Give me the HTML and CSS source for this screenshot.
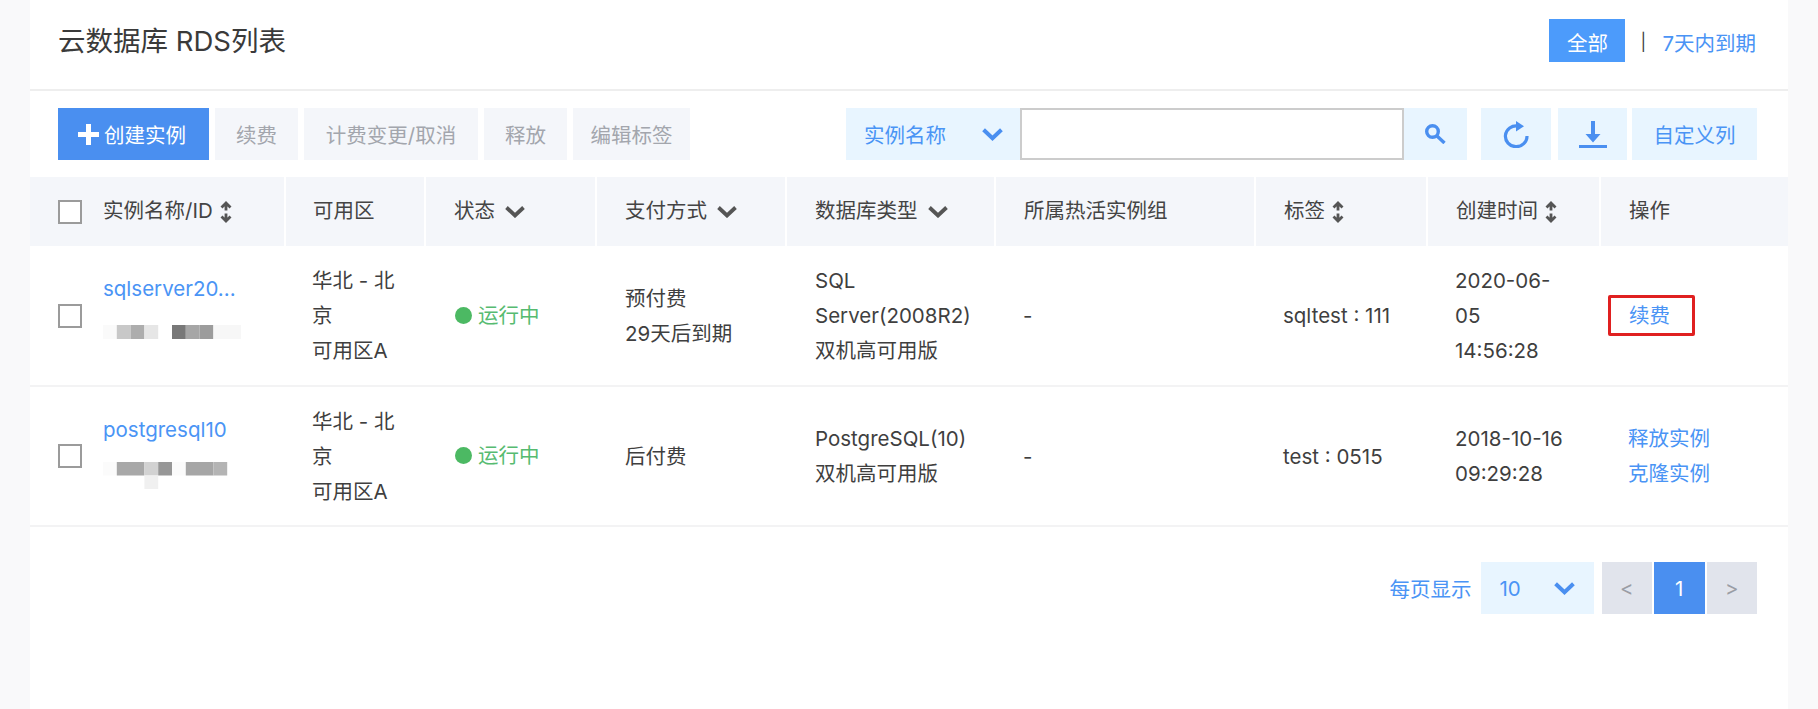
FILE: index.html
```html
<!DOCTYPE html>
<html lang="zh-CN">
<head>
<meta charset="utf-8">
<title>云数据库 RDS列表</title>
<link rel="stylesheet" href="styles.css">
</head>
<body>
<svg class="defs" width="0" height="0" aria-hidden="true">
  <symbol id="sort" viewBox="0 0 12 22"><path d="M1.500 6.500 6 2l4.500 4.500M6 3v6.500M1.500 15.500 6 20l4.500-4.500M6 19v-6.500" fill="none" stroke="currentColor" stroke-width="2.800"/></symbol>
  <symbol id="chev" viewBox="0 0 20 12"><path d="M1.500 1.500 10 9.500l8.500-8" fill="none" stroke="currentColor" stroke-width="3.800"/></symbol>
</svg>
<main class="panel">
  <header class="head">
    <h1 class="title">云数据库 RDS列表</h1>
    <nav class="tabs">
      <a class="tab-on">全部</a>
      <span class="tab-sep">|</span>
      <a class="tab-link">7天内到期</a>
    </nav>
  </header>

  <section class="toolbar">
    <div class="actions">
      <button class="btn btn-primary"><svg class="plus" viewBox="0 0 21 21"><path d="M8 0h5v8h8v5h-8v8H8v-8H0V8h8z"/></svg>创建实例</button>
      <button class="btn btn-off w-renew">续费</button>
      <button class="btn btn-off w-change">计费变更/取消</button>
      <button class="btn btn-off w-release">释放</button>
      <button class="btn btn-off w-tags">编辑标签</button>
    </div>
    <div class="tools">
      <div class="search">
        <div class="search-type"><span>实例名称</span><svg class="chev-blue"><use href="#chev"/></svg></div>
        <input class="search-input" type="text" aria-label="搜索">
        <div class="search-go"><svg class="i-search" viewBox="0 0 21 20"><circle cx="7.500" cy="7.500" r="5.800" fill="none" stroke="currentColor" stroke-width="3.400"/><path d="M12 12l7.500 7" stroke="currentColor" stroke-width="3.400" fill="none"/></svg></div>
      </div>
      <div class="tool-btn tool-refresh"><svg class="i-refresh" viewBox="0 0 26 27"><path d="M15 5A10.800 10.400 0 1 0 24 15" fill="none" stroke="currentColor" stroke-width="3.200"/><path d="M13 0l8 5.200-8 5.300z" fill="currentColor"/></svg></div>
      <div class="tool-btn tool-down"><svg class="i-down" viewBox="0 0 28 27"><path d="M12 0h4v13h5.500L14 21.500 6.500 13H12z" fill="currentColor"/><path d="M0 24h28v3H0z" fill="currentColor"/></svg></div>
      <div class="tool-btn tool-custom">自定义列</div>
    </div>
  </section>

  <table class="grid">
    <colgroup>
      <col class="c-name"><col class="c-zone"><col class="c-state"><col class="c-pay"><col class="c-db"><col class="c-group"><col class="c-tag"><col class="c-time"><col class="c-op">
    </colgroup>
    <thead>
      <tr>
        <th><div class="name-cell"><span class="check"></span><span class="th-in">实例名称/ID<svg class="sort"><use href="#sort"/></svg></span></div></th>
        <th class="th-plain">可用区</th>
        <th class="th-icon"><span class="th-in">状态<svg class="chev"><use href="#chev"/></svg></span></th>
        <th class="th-icon"><span class="th-in">支付方式<svg class="chev"><use href="#chev"/></svg></span></th>
        <th class="th-icon"><span class="th-in">数据库类型<svg class="chev"><use href="#chev"/></svg></span></th>
        <th class="th-plain">所属热活实例组</th>
        <th class="th-icon"><span class="th-in">标签<svg class="sort"><use href="#sort"/></svg></span></th>
        <th class="th-icon"><span class="th-in">创建时间<svg class="sort"><use href="#sort"/></svg></span></th>
        <th class="th-plain">操作</th>
      </tr>
    </thead>
    <tbody>
      <tr>
        <td><div class="name-cell"><span class="check"></span>
          <div class="name-block"><a class="link">sqlserver20...</a>
            <svg class="mosaic mosaic-a" width="138" height="14" viewBox="0 0 10 1" preserveAspectRatio="none">
              <rect x="0" width="1" height="1" fill="#fafafa"/><rect x="1" width="1" height="1" fill="#c8c8c8"/><rect x="2" width="1" height="1" fill="#adadad"/><rect x="3" width="1" height="1" fill="#e6e6e6"/><rect x="5" width="1" height="1" fill="#787878"/><rect x="6" width="1" height="1" fill="#a6a6a6"/><rect x="7" width="1" height="1" fill="#9c9c9c"/><rect x="8" width="2" height="1" fill="#f7f7f7"/>
            </svg>
          </div></div></td>
        <td>华北 - 北<br>京<br>可用区A</td>
        <td><span class="status"><i class="dot"></i>运行中</span></td>
        <td>预付费<br>29天后到期</td>
        <td>SQL<br>Server(2008R2)<br>双机高可用版</td>
        <td>-</td>
        <td>sqltest : 111</td>
        <td>2020-06-<br>05<br>14:56:28</td>
        <td><a class="link renew">续费</a></td>
      </tr>
      <tr>
        <td><div class="name-cell"><span class="check"></span>
          <div class="name-block"><a class="link">postgresql10</a>
            <svg class="mosaic mosaic-b" width="138" height="27" viewBox="0 0 10 2" preserveAspectRatio="none">
              <rect x="0" width="1" height="1" fill="#fbfbfb"/><rect x="1" width="2" height="1" fill="#a8a8a8"/><rect x="3" width="1" height="1" fill="#d2d2d2"/><rect x="4" width="1" height="1" fill="#979797"/><rect x="5" width="1" height="1" fill="#fbfbfb"/><rect x="6" width="2" height="1" fill="#a6a6a6"/><rect x="8" width="1" height="1" fill="#b4b4b4"/><rect x="3" y="1" width="1" height="1" fill="#f0f0f0"/>
            </svg>
          </div></div></td>
        <td>华北 - 北<br>京<br>可用区A</td>
        <td><span class="status"><i class="dot"></i>运行中</span></td>
        <td>后付费</td>
        <td>PostgreSQL(10)<br>双机高可用版</td>
        <td>-</td>
        <td>test : 0515</td>
        <td>2018-10-16<br>09:29:28</td>
        <td><a class="link">释放实例</a><br><a class="link">克隆实例</a></td>
      </tr>
    </tbody>
  </table>

  <footer class="pager">
    <span class="pager-label">每页显示</span>
    <div class="pager-size"><span>10</span><svg class="chev-blue"><use href="#chev"/></svg></div>
    <div class="pages">
      <span class="page">&lt;</span>
      <span class="page page-on">1</span>
      <span class="page">&gt;</span>
    </div>
  </footer>
</main>
</body>
</html>
```
FILE: styles.css
```css
* { box-sizing: border-box; }
html, body { margin: 0; height: 100%; }
body {
  background: #f9f9fa;
  color: #3f3f3f;
  font-family: "Inter", "Noto Sans CJK SC", sans-serif;
  font-size: 20.500px;
  overflow: hidden;
}
.defs { position: absolute; }
.panel { margin: 0 30px; height: 709px; background: #fff; }

.head {
  display: flex;
  justify-content: space-between;
  height: 91px;
  padding: 19px 32px 0 28px;
  border-bottom: 2px solid #eeeeee;
}
.title { margin: 0; font-size: 27.500px; font-weight: 400; line-height: 45px; color: #3a3a3a; }
.tabs { display: flex; align-items: center; height: 43px; }
.tab-on {
  display: flex; align-items: center; justify-content: center;
  width: 76px; height: 43px; padding-top: 2px;
  background: #4c9bfb; color: #fff;
}
.tab-sep { margin-left: 15px; width: 22px; font-size: 17px; padding-top: 2px; }
.tab-link { color: #4a94f5; padding-top: 2px; }

.toolbar {
  display: flex;
  justify-content: space-between;
  padding: 17px 31px 17px 28px;
}
.actions, .tools, .search { display: flex; }
.actions { gap: 6px; }
.btn {
  display: flex; align-items: center; justify-content: center;
  height: 52px; border: 0; padding: 0;
  font: inherit;
}
.btn-primary { width: 151px; background: #4a8ff0; color: #fff; }
.plus { width: 21px; height: 21px; fill: #fff; margin: 0 5px 0 -3px; }
.btn-off { background: #f4f6fa; color: #a3a6ad; }
.w-renew { width: 83px; }
.w-change { width: 174px; }
.w-release { width: 83px; }
.w-tags { width: 117px; }

.search { margin-right: 14px; }
.search-type {
  display: flex; align-items: center; justify-content: space-between;
  width: 174px; height: 52px; padding: 0 17px 0 18px;
  background: #e8f5ff; color: #4a94f5;
}
.search-input {
  width: 384px; height: 52px;
  border: 2px solid #cccccc; background: #fff;
  outline: 0;
}
.search-go {
  display: flex; align-items: center; justify-content: center;
  width: 63px; height: 52px;
  background: #e8f5ff; color: #4a8ff0;
}
.i-search { width: 21px; height: 20px; }
.chev-blue { width: 21px; height: 13px; color: #4a8ff0; }

.tool-btn {
  display: flex; align-items: center; justify-content: center;
  height: 52px; background: #e8f5ff; color: #4a94f5;
}
.tool-refresh { width: 70px; margin-right: 7px; color: #4a8ff0; }
.tool-down { width: 69px; margin-right: 5px; color: #4a8ff0; }
.tool-custom { width: 125px; }
.i-refresh { width: 26px; height: 27px; }
.i-down { width: 28px; height: 27px; }

.grid { width: 100%; table-layout: fixed; border-collapse: collapse; }
.c-name { width: 255px; }
.c-zone { width: 140px; }
.c-state { width: 171px; }
.c-pay { width: 190px; }
.c-db { width: 209px; }
.c-group { width: 260px; }
.c-tag { width: 172px; }
.c-time { width: 173px; }
.c-op { width: 188px; }

.grid th {
  height: 69px; padding: 0 0 0 28px;
  background: #f4f6fa;
  border-right: 2px solid #fff;
  font-weight: 400; text-align: left; color: #444;
  white-space: nowrap;
}
.grid th:last-child { border-right: 0; }
.grid th.th-plain { padding-bottom: 5px; }
.grid th.th-icon { padding-bottom: 2px; }
.grid th:nth-child(2), .grid td:nth-child(2) { padding-left: 27px; }
.grid td {
  height: 140px; padding: 0 0 0 28px;
  border-bottom: 2px solid #f3f3f4;
  line-height: 35px;
  vertical-align: middle;
}
.grid td:nth-child(3) { padding-left: 30px; }
.grid td:nth-child(4), .grid td:nth-child(5) { padding-left: 29px; }
.th-in { display: inline-flex; align-items: center; line-height: 28px; }
.name-cell .th-in { margin-bottom: 2px; }
.sort { width: 12px; height: 22px; margin: 2px 0 0 7px; color: #555; }
.chev { width: 20px; height: 12px; margin: 2px 0 0 10px; color: #555; }

.name-cell { display: flex; align-items: center; }
.check {
  flex: none; width: 24px; height: 24px; margin-right: 21px;
  border: 2px solid #9b9b9b; background: #fff;
}
.name-block { height: 89px; }
.name-block .link { display: block; }
.mosaic { display: block; }
.mosaic-a { margin-top: 19px; }
.mosaic-b { margin-top: 15px; }

.link { color: #4a94f5; }
.status { display: inline-flex; align-items: center; color: #56bb70; }
.dot {
  width: 17px; height: 17px; margin-right: 6px;
  border-radius: 50%; background: #4cb963;
}
.renew {
  display: inline-block;
  margin-left: -20px;
  width: 87px; height: 41px; line-height: 35px;
  padding-left: 18px;
  border: 3px solid #e02020; border-radius: 2px;
}

.pager {
  display: flex; justify-content: flex-end; align-items: center;
  padding: 35px 31px 0 0;
}
.pager-label { color: #4a94f5; margin-right: 9px; }
.pager-size {
  display: flex; align-items: center; justify-content: space-between;
  width: 113px; height: 52px; padding: 0 19px;
  background: #e8f5ff; color: #4a94f5;
}
.pages { display: flex; gap: 2px; margin-left: 8px; }
.page {
  display: flex; align-items: center; justify-content: center;
  width: 50.500px; height: 52px;
  background: #e1e4ec; color: #9a9da5;
}
.page-on { background: #4a8ff0; color: #fff; }
```
